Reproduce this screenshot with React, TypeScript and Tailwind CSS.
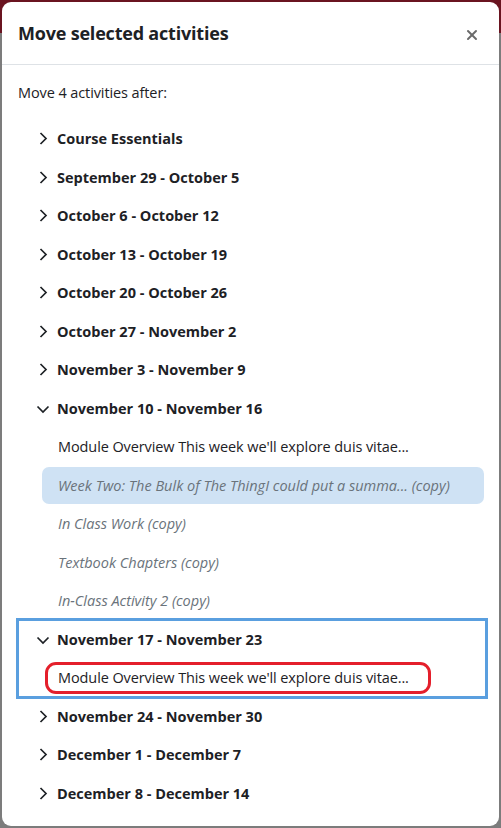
import { X } from "lucide-react";

type Section = {
  title: string;
  open?: boolean;
  focused?: boolean;
  items?: { label: string; copy?: boolean; selected?: boolean; marked?: boolean }[];
};

const SECTIONS: Section[] = [
  { title: "Course Essentials" },
  { title: "September 29 - October 5" },
  { title: "October 6 - October 12" },
  { title: "October 13 - October 19" },
  { title: "October 20 - October 26" },
  { title: "October 27 - November 2" },
  { title: "November 3 - November 9" },
  {
    title: "November 10 - November 16",
    open: true,
    items: [
      { label: "Module Overview This week we'll explore duis vitae..." },
      { label: "Week Two: The Bulk of The ThingI could put a summa... (copy)", copy: true, selected: true },
      { label: "In Class Work (copy)", copy: true },
      { label: "Textbook Chapters (copy)", copy: true },
      { label: "In-Class Activity 2 (copy)", copy: true },
    ],
  },
  {
    title: "November 17 - November 23",
    open: true,
    focused: true,
    items: [{ label: "Module Overview This week we'll explore duis vitae...", marked: true }],
  },
  { title: "November 24 - November 30" },
  { title: "December 1 - December 7" },
  { title: "December 8 - December 14" },
];

function Chevron({ open }: { open?: boolean }) {
  return (
    <span className="w-[14px] h-[16px] flex items-center justify-center">
      {open ? (
        <svg width="14" height="10" viewBox="0 0 14 10" fill="none">
          <path d="M1.5 2.5 L7 8 L12.5 2.5" stroke="#1d2125" strokeWidth="1.7" />
        </svg>
      ) : (
        <svg width="10" height="16" viewBox="0 0 10 16" fill="none">
          <path d="M2.5 2 L8 7.5 L2.5 13" stroke="#1d2125" strokeWidth="1.7" />
        </svg>
      )}
    </span>
  );
}

function Item({ item }: { item: NonNullable<Section["items"]>[number] }) {
  if (item.marked) {
    return (
      <div className="h-[38.5px] flex items-center pl-[27px]">
        <span className="h-[32px] w-[386px] flex items-center pl-[10px] rounded-[11px] border-[3px] border-[#e41f2b] text-[#1d2125] tracking-[-0.1px]">
          {item.label}
        </span>
      </div>
    );
  }
  return (
    <div className="h-[38.5px] flex items-center pl-[24px] pr-[2px]">
      <div
        className={`h-[37px] w-full flex items-center pl-[16px] rounded-[7px] ${
          item.selected ? "bg-[#cfe2f4]" : ""
        } ${item.copy ? "italic text-[#6a737b]" : "text-[#1d2125] tracking-[-0.1px]"}`}
      >
        {item.label}
      </div>
    </div>
  );
}

function SectionRow({ s }: { s: Section }) {
  return (
    <div
      className={
        s.focused ? "outline-[3px] outline-solid outline-[#5a9fdf] -outline-offset-1" : ""
      }
    >
      <div className="h-[38.5px] flex items-center gap-[7px] pl-[18px] font-bold text-[#1d2125]">
        <Chevron open={s.open} />
        <span>{s.title}</span>
      </div>
      {s.open && s.items?.map((it, i) => <Item key={i} item={it} />)}
    </div>
  );
}

export default function App() {
  return (
    <div
      className="relative w-[501px] h-[828px] bg-[#7c7c7c] overflow-hidden text-[14.5px]"
      style={{ fontFamily: '"Open Sans", "Noto Sans", sans-serif' }}
    >
      <div className="absolute top-0 left-0 right-0 h-[33px] bg-[#6a1420]" />
      <div className="absolute left-[2px] right-[2px] top-[2px] bottom-[2px] bg-white rounded-[9px] flex flex-col">
        <div className="h-[63px] flex items-center justify-between pl-[16px] pr-[19px] pt-[1px] border-b border-[#dee2e6]">
          <h1 className="text-[18px] font-bold text-[#1d2125] tracking-[-0.2px]">Move selected activities</h1>
          <X size={16} strokeWidth={3} className="text-[#6a6a6a] mt-[3px]" />
        </div>
        <div className="pl-[16px] pr-[13px] pt-[17px]">
          <p className="text-[#1d2125] mb-[16px] tracking-[-0.1px]">Move 4 activities after:</p>
          <div>
            {SECTIONS.map((s) => (
              <SectionRow key={s.title} s={s} />
            ))}
          </div>
        </div>
      </div>
    </div>
  );
}
